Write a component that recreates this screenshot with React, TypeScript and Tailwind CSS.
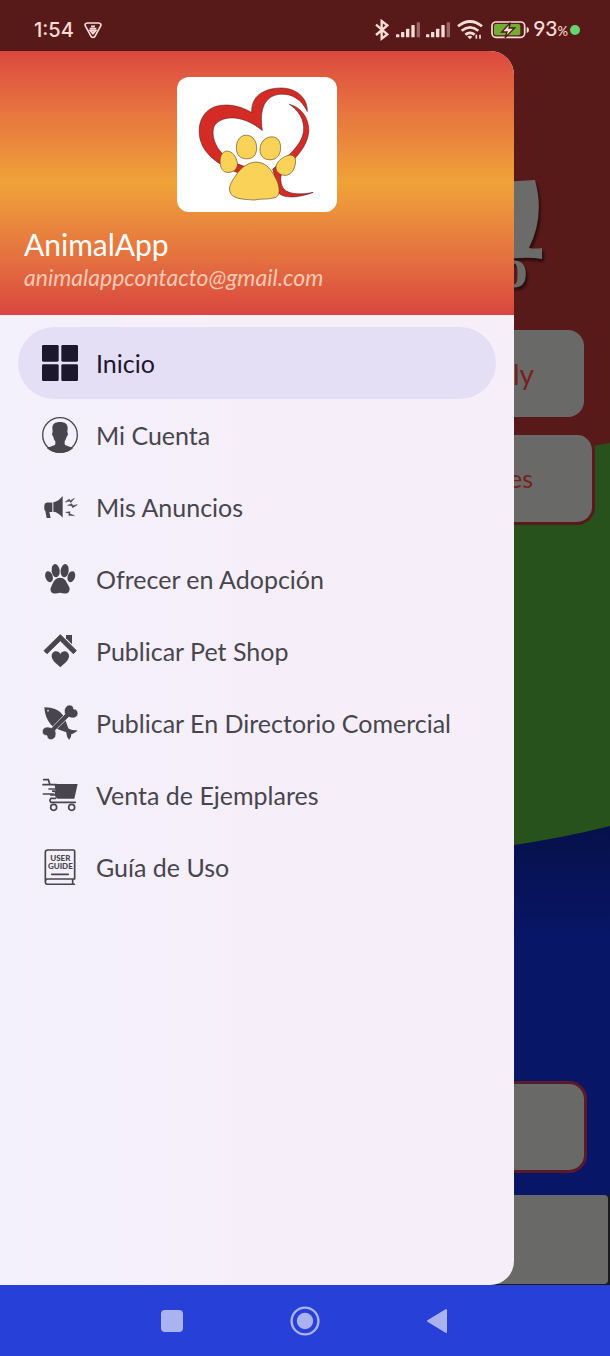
import React from 'react';

type MenuItem = {
  label: string;
  icon: React.ReactNode;
  active?: boolean;
};

function HomeIcon() {
  return (
    <svg className="size-9 shrink-0" viewBox="0 0 108 108" fill="currentColor" aria-hidden="true">
      <rect width="50" height="50" rx="4" />
      <rect x="58" width="50" height="50" rx="4" />
      <rect y="58" width="50" height="50" rx="4" />
      <rect x="58" y="58" width="50" height="50" rx="4" />
    </svg>
  );
}

function AccountIcon() {
  return (
    <svg className="size-9 shrink-0" viewBox="126 291 108 108" fill="currentColor" aria-hidden="true">
      <circle cx="180" cy="345" r="52" fill="none" stroke="currentColor" strokeWidth="4" />
      <path d="M180 306c15 0 23 6 23 18l-1 13c3 2 2 11-2 13-2 7-4 11-6 14v9c4 6 17 6 25 12-10 9-24 14-39 14s-29-5-39-14c8-6 21-6 25-12v-9c-3-3-5-7-6-14-4-2-5-11-2-13l-1-13c0-12 8-18 23-18z" />
    </svg>
  );
}

function MegaphoneIcon() {
  return (
    <svg className="size-9 shrink-0" viewBox="126 507 108 108" fill="currentColor" aria-hidden="true">
      <path d="M188 528v65c-8-10-17-17-28-18v-28c11-2 20-9 28-19z" />
      <path d="M157 548v28h-9l4 18h-12l-4-21c-5-2-4-23 1-24 6-2 13-1 20-1z" />
      <g stroke="currentColor" strokeWidth="1.5" strokeLinejoin="round">
        <path d="M196 546l12-9 2 6 13-8-11 13-3-5zM203 556l13-5 2 6 14-3-14 9-3-6zM197 577l13-2-1 6 14 6-17-1 2-6z" />
      </g>
    </svg>
  );
}

function PawIcon() {
  return (
    <svg className="size-9 shrink-0" viewBox="126 63 108 108" fill="currentColor" aria-hidden="true">
      <ellipse cx="147" cy="110" rx="11" ry="17" transform="rotate(-18 147 110)" />
      <ellipse cx="167" cy="92" rx="12" ry="20" transform="rotate(-7 167 92)" />
      <ellipse cx="194" cy="92" rx="12" ry="20" transform="rotate(7 194 92)" />
      <ellipse cx="214" cy="110" rx="11" ry="17" transform="rotate(18 214 110)" />
      <path d="M180 113c13 0 19 10 23 20 4 8 8 11 5 19-4 12-18 9-28 6-10 3-24 6-28-6-2-8 2-11 5-19 4-10 11-20 23-20z" />
    </svg>
  );
}

function PetShopIcon() {
  return (
    <svg className="size-9 shrink-0" viewBox="126 279 108 108" fill="currentColor" aria-hidden="true">
      <path d="M181 284l48 48-9 9-39-39-40 39-9-9z" strokeLinejoin="round" stroke="currentColor" strokeWidth="3" />
      <path d="M198 285h18v28l-18-18z" />
      <path d="M181 382c-10-9-26-20-26-33 0-17 20-20 26-7 6-13 26-10 26 7 0 13-16 24-26 33z" />
    </svg>
  );
}

function BoneIcon() {
  return (
    <svg className="size-9 shrink-0" viewBox="126 495 108 108" fill="currentColor" aria-hidden="true">
      <path d="M133 502c27 0 45 8 56 24 8 12 10 25 16 39 8 6 15 5 28 7-8 6-13 9-19 10 0 6-2 12-6 17-7-5-8-13-9-22-14-6-29-8-42-19-14-13-22-31-24-56z" />
      <circle cx="144" cy="512" r="2.5" fill="#f5f0fb" />
      <path
        d="M195 522c-5-11 1-26 13-27 8 0 13 5 13 12 8 0 13 6 13 14-2 13-17 16-27 10l-41 40c5 13 0 27-12 28-8 1-13-5-13-12-9 0-15-6-14-14 2-12 16-15 27-9z"
        stroke="#f5f0fb"
        strokeWidth="2"
      />
    </svg>
  );
}

function CartIcon() {
  return (
    <svg className="size-9 shrink-0" viewBox="126 51 108 108" fill="none" stroke="currentColor" strokeWidth="5" strokeLinecap="round" aria-hidden="true">
      <path d="M131 59h14l5 15M129 74h40M147 87h20M130 102h30M167 115h-14q-6 6 0 12h73" />
      <path d="M163 72h70l-10 44h-50q-8-4-8-9h-15v-4h14v-7h-8v-5h11z" fill="currentColor" stroke="none" />
      <circle cx="161" cy="142" r="9" />
      <circle cx="215" cy="142" r="9" />
    </svg>
  );
}

function GuideIcon() {
  return (
    <svg className="size-9 shrink-0" viewBox="126 267 108 108" fill="none" stroke="currentColor" strokeWidth="5" aria-hidden="true">
      <path d="M224 357H143q-7 0-7 8t7 8h80M136 365v-88q0-7 7-7h77q4 0 4 4v83M218 357v16M155 343h50" strokeLinecap="round" />
      <g fill="currentColor" stroke="none" fontFamily="Lato, sans-serif" fontWeight="900" fontSize="24" textAnchor="middle">
        <text x="181" y="302">USER</text>
        <text x="181" y="328">GUIDE</text>
      </g>
    </svg>
  );
}

const menuItems: MenuItem[] = [
  { label: 'Inicio', icon: <HomeIcon />, active: true },
  { label: 'Mi Cuenta', icon: <AccountIcon /> },
  { label: 'Mis Anuncios', icon: <MegaphoneIcon /> },
  { label: 'Ofrecer en Adopción', icon: <PawIcon /> },
  { label: 'Publicar Pet Shop', icon: <PetShopIcon /> },
  { label: 'Publicar En Directorio Comercial', icon: <BoneIcon /> },
  { label: 'Venta de Ejemplares', icon: <CartIcon /> },
  { label: 'Guía de Uso', icon: <GuideIcon /> },
];

function AppLogo() {
  return (
    <svg className="h-[135px] w-[160px] rounded-xl bg-white" viewBox="51 51 480 406" role="img" aria-label="AnimalApp">
      <g fill="#d52b27" stroke="#3a1515" strokeWidth="1.5">
        <path d="M275 158C235 133 190 130 160 142 118 160 110 210 122 245 132 278 165 312 235 340L262 322C225 312 200 298 182 276 160 250 153 215 164 196 190 162 255 168 307 212 297 145 315 108 360 103 395 100 425 118 442 155 445 115 410 85 365 84 310 84 272 110 275 158z" />
        <path d="M388 133C425 142 447 175 447 212 444 265 400 300 366 338 360 355 362 375 372 388 388 405 425 405 460 398 420 413 380 418 358 402L338 328C385 290 425 255 431 215 435 180 415 150 388 133z" />
      </g>
      <g fill="#fad258" stroke="#6b4a1b" strokeWidth="2">
        <path d="M258 226c20 0 32 18 32 38 0 22-12 33-30 33-20 0-31-12-31-33 0-22 12-38 29-38z" />
        <path d="M335 231c19 0 27 14 27 33 0 22-12 36-32 36-19 0-31-13-30-32 1-21 16-37 35-37z" />
        <path d="M200 274c17 0 27 14 32 34 2 20-12 30-28 30-16 0-24-14-24-32 0-19 7-31 20-32z" />
        <path d="M388 286c13-2 19 6 19 20-1 22-14 40-31 41-17 0-29-12-28-25 1-17 22-33 40-36z" />
        <path d="M288 307c32 0 46 25 58 46 12 20 18 52 2 60-25 8-45 3-66 8-22-2-58-1-70-19-10-18 2-36 14-53 14-22 36-42 62-42z" />
      </g>
    </svg>
  );
}

function SignalIcon() {
  return (
    <svg className="h-4 w-6 shrink-0" viewBox="0 0 72 48" fill="#fbdcd6" aria-hidden="true">
      <rect y="37" width="10" height="9" rx="2" />
      <rect x="15" y="30" width="10" height="16" rx="2" />
      <rect x="30" y="20" width="10" height="26" rx="2" />
      <rect x="46" y="9" width="10" height="37" rx="2" />
      <rect x="62" y="1" width="10" height="45" rx="2" opacity="0.4" />
    </svg>
  );
}

function StatusBar() {
  return (
    <div className="flex h-[51px] items-center justify-between pt-2 pr-[30px] pl-[34px] text-[#fbdcd6]">
      <div className="flex items-center gap-[10px]">
        <span className="font-[Inter] text-[20px] leading-6 font-medium">1:54</span>
        <svg className="size-[18px]" viewBox="250 61 54 54" fill="none" stroke="currentColor" strokeWidth="5" aria-hidden="true">
          <path d="M260 67h34q9 1 6 9l-17 31q-6 7-12 0l-17-31q-3-8 6-9z" />
          <path d="M267 84h20M271 77h12M269 90l8 9 8-9z" />
        </svg>
      </div>
      <div className="flex items-center">
        <svg className="mr-[7px] h-[22px] w-[14px]" viewBox="46 53 42 66" fill="none" stroke="currentColor" strokeWidth="7" aria-hidden="true">
          <path d="M49 70l34 29-17 13V59l17 13-34 29" />
        </svg>
        <div className="mr-[7px] flex gap-[6px]">
          <SignalIcon />
          <SignalIcon />
        </div>
        <svg className="mr-2 h-5 w-[26px]" viewBox="292 57 78 60" fill="none" stroke="currentColor" strokeWidth="8" aria-hidden="true">
          <path d="M295 76q36-29 72 0M306 89q25-20 50 0M317 101q14-11 28 0" />
          <path d="M323 107q8-5 15 0l-7 8z" fill="currentColor" stroke="none" />
          <path d="M350 101v12M361 101v12" strokeWidth="5" />
        </svg>
        <svg className="mr-1 h-5 w-[38px]" viewBox="393 57 114 60" aria-hidden="true">
          <rect x="396" y="63" width="98" height="46" rx="12" fill="none" stroke="#fbdcd6" strokeWidth="5" />
          <path d="M500 78q7 2 7 9t-7 9z" fill="#fbdcd6" />
          <rect x="402" y="69" width="79" height="34" rx="6" fill="#72ae35" />
          <path d="M451 65l-26 28h16l-6 17 29-29h-17z" fill="#fbdcd6" stroke="#4a1916" strokeWidth="4" />
        </svg>
        <span className="flex items-baseline leading-6">
          <span className="text-[21px] font-medium">93</span>
          <span className="text-[13px] font-medium">%</span>
        </span>
        <span className="ml-[2px] size-[10px] rounded-full bg-[#66d474]" />
      </div>
    </div>
  );
}

// Dimmed home screen that stays visible behind the open drawer
function HomeScreen() {
  return (
    <div className="relative flex flex-col overflow-hidden bg-[#581a19] [grid-area:1/1]">
      <svg className="absolute inset-0 size-full" viewBox="0 0 610 1285" preserveAspectRatio="none" aria-hidden="true">
        <defs>
          <linearGradient id="sea" x1="0" y1="826" x2="0" y2="940" gradientUnits="userSpaceOnUse">
            <stop offset="0" stopColor="#06114a" />
            <stop offset="1" stopColor="#071667" />
          </linearGradient>
        </defs>
        <path d="M0 520Q400 480 610 443V900H0z" fill="#28521c" />
        <path d="M0 862Q400 879 610 826V1285H0z" fill="url(#sea)" />
      </svg>
      <div className="relative flex flex-1 flex-col">
        <svg className="mt-[178px] mr-[64px] h-[116px] w-[80px] self-end overflow-visible drop-shadow-[2px_3px_1px_#2d0d0d]" viewBox="466 178 80 116" fill="#6b6b69" aria-hidden="true">
          <path d="M466 184L535 180q10 36-6 68 6 1 13 0v11q-30-5-76 10z" />
          <text x="499" y="287" fontFamily="Liberation Serif, serif" fontWeight="700" fontSize="58">o</text>
        </svg>
        <button className="mt-9 mr-[26px] ml-6 flex h-[87px] items-center justify-end rounded-[16px] bg-[#696967] pr-[50px] text-[28px] text-[#78201f]">
          ly
        </button>
        <button className="mt-[15px] mr-[15px] ml-4 flex h-[93px] items-center justify-end rounded-[18px] border-[3px] border-[#5a1a1a] bg-[#696967] pr-[59px] text-[25px] text-[#78201f]">
          es
        </button>
        <div className="mt-auto mr-[23px] ml-6 h-[92px] rounded-[18px] border-[3px] border-[#5a1a28] bg-[#696967]" />
        <div className="mt-[22px] bg-[#1a1b1e] pr-[2px] pb-px">
          <div className="h-[89px] rounded-[4px] bg-[#696967]" />
        </div>
      </div>
    </div>
  );
}

function Drawer() {
  return (
    <aside className="mr-24 flex flex-1 flex-col overflow-hidden rounded-r-[24px] bg-linear-to-r from-[#f3f1fc] to-[#f6effa] to-50%">
      <header className="flex flex-col bg-linear-to-b from-[#dc4740] via-[#efa238] to-[#d94540] px-6 pt-[26px] pb-[22px]">
        <div className="flex justify-center">
          <AppLogo />
        </div>
        <h1 className="mt-4 text-[30px] leading-8 text-white">AnimalApp</h1>
        <p className="mt-px text-[23px] leading-8 text-[#fbc9b3] italic">animalappcontacto@gmail.com</p>
      </header>
      <nav className="px-[18px] pt-3">
        <ul>
          {menuItems.map((item) => (
            <li key={item.label}>
              <a
                href="#"
                aria-current={item.active ? 'page' : undefined}
                className={
                  'flex h-[72px] items-center gap-[18px] rounded-full px-6 text-[25px] whitespace-nowrap ' +
                  (item.active ? 'bg-[#e5dff5] text-[#1d172d]' : 'text-[#48454f]')
                }
              >
                {item.icon}
                <span className="pt-px">{item.label}</span>
              </a>
            </li>
          ))}
        </ul>
      </nav>
    </aside>
  );
}

function NavigationBar() {
  return (
    <div className="flex h-[71px] items-center justify-center bg-[#2640d8] text-[#aab2f0]">
      <button aria-label="Recientes" className="flex h-full w-[133px] items-center justify-center">
        <span className="size-[22px] rounded-[4px] bg-current" />
      </button>
      <button aria-label="Inicio" className="flex h-full w-[133px] items-center justify-center">
        <svg className="size-[30px]" viewBox="0 0 30 30" aria-hidden="true">
          <circle cx="15" cy="15" r="13.4" fill="none" stroke="currentColor" strokeWidth="2.4" />
          <circle cx="15" cy="15" r="8.2" fill="currentColor" />
        </svg>
      </button>
      <button aria-label="Atrás" className="flex h-full w-[133px] items-center justify-center pr-1">
        <svg className="h-[26px] w-[21px]" viewBox="0 0 21 26" fill="currentColor" stroke="currentColor" strokeWidth="2" strokeLinejoin="round" aria-hidden="true">
          <path d="M2 13L20 2v22z" />
        </svg>
      </button>
    </div>
  );
}

export default function App() {
  return (
    <div className="flex min-h-screen flex-col font-[Lato,sans-serif]">
      <div className="grid flex-1">
        <HomeScreen />
        <div className="relative flex flex-col [grid-area:1/1]">
          <StatusBar />
          <Drawer />
        </div>
      </div>
      <NavigationBar />
    </div>
  );
}
